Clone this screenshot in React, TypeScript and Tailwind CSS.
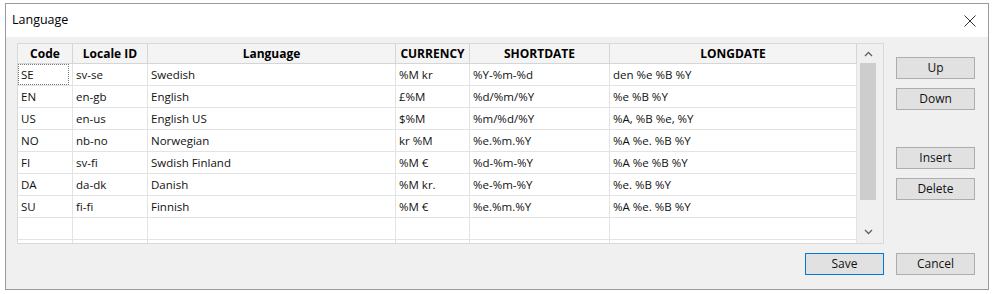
import React from "react";

const cols = [
  { w: 55, label: "Code" },
  { w: 75, label: "Locale ID" },
  { w: 248, label: "Language" },
  { w: 74, label: "CURRENCY" },
  { w: 140, label: "SHORTDATE" },
  { w: 247, label: "LONGDATE" },
];

const rows: string[][] = [
  ["SE", "sv-se", "Swedish", "%M kr", "%Y-%m-%d", "den %e %B %Y"],
  ["EN", "en-gb", "English", "£%M", "%d/%m/%Y", "%e %B %Y"],
  ["US", "en-us", "English US", "$%M", "%m/%d/%Y", "%A, %B %e, %Y"],
  ["NO", "nb-no", "Norwegian", "kr %M", "%e.%m.%Y", "%A %e. %B %Y"],
  ["FI", "sv-fi", "Swdish Finland", "%M €", "%d-%m-%Y", "%A %e %B %Y"],
  ["DA", "da-dk", "Danish", "%M kr.", "%e-%m-%Y", "%e. %B %Y"],
  ["SU", "fi-fi", "Finnish", "%M €", "%e.%m.%Y", "%A %e. %B %Y"],
  ["", "", "", "", "", ""],
  ["", "", "", "", "", ""],
];

function Btn({ label, primary }: { label: string; primary?: boolean }) {
  return (
    <div
      className={
        "w-[79px] h-[22px] flex items-center justify-center bg-[#e1e1e1] text-[12px] text-[#111] border " +
        (primary ? "border-[#0078d7]" : "border-[#adadad]")
      }
    >
      {label}
    </div>
  );
}

function Chevron({ up }: { up?: boolean }) {
  return (
    <svg width="9" height="6" viewBox="0 0 9 6">
      <path
        d={up ? "M1 5 L4.5 1.5 L8 5" : "M1 1 L4.5 4.5 L8 1"}
        fill="none"
        stroke="#606060"
        strokeWidth="1.3"
      />
    </svg>
  );
}

export default function App() {
  return (
    <div
      className="w-[994px] h-[294px] bg-white pt-[3px] pl-[5px]"
      style={{ fontFamily: '"Open Sans", "Noto Sans", sans-serif' }}
    >
      <div className="w-[984px] h-[287px] border border-[#9a9a9a] flex flex-col">
        <div className="h-[33px] bg-white flex items-center justify-between pl-[6px] pr-[12px]">
          <span className="text-[12.5px] text-black">Language</span>
          <svg width="12" height="12" viewBox="0 0 12 12">
            <path d="M0.5 0.5 L11.5 11.5 M11.5 0.5 L0.5 11.5" stroke="#333" strokeWidth="1" />
          </svg>
        </div>
        <div className="flex-1 bg-[#f0f0f0] pt-[6px] pl-[11px] pr-[12px] flex gap-[12px]">
          <div className="w-[867px] flex flex-col">
            <div className="h-[201px] border border-[#d9d9d9] bg-white flex overflow-hidden">
              <div className="w-[839px] flex flex-col overflow-hidden">
                <div className="h-[20px] flex border-b border-[#d5d5d5] bg-[#f4f4f4] shrink-0">
                  {cols.map((c, i) => (
                    <div
                      key={i}
                      style={{ width: c.w }}
                      className="shrink-0 h-full flex items-center justify-center font-bold text-[12px] text-black border-r border-[#d5d5d5]"
                    >
                      {c.label}
                    </div>
                  ))}
                </div>
                {rows.map((r, ri) => (
                  <div key={ri} className="h-[22px] flex border-b border-[#e3e3e3] shrink-0">
                    {r.map((v, ci) => (
                      <div
                        key={ci}
                        style={{ width: cols[ci].w }}
                        className="shrink-0 h-full flex items-center pl-[3px] text-[11.5px] text-[#111] border-r border-[#e3e3e3]"
                      >
                        {ri === 0 && ci === 0 ? (
                          <div className="w-full h-full border border-dotted border-[#777] flex items-center -ml-[3px] pl-[2px]">
                            {v}
                          </div>
                        ) : (
                          v
                        )}
                      </div>
                    ))}
                  </div>
                ))}
              </div>
              <div className="w-[26px] bg-[#f0f0f0] flex flex-col pl-[3px] pr-[7px]">
                <div className="h-[19px] flex items-center justify-center">
                  <Chevron up />
                </div>
                <div className="h-[137px] bg-[#cdcdcd]" />
                <div className="flex-1 flex items-end justify-center pb-[8px]">
                  <Chevron />
                </div>
              </div>
            </div>
            <div className="flex justify-end mt-[9px]">
              <Btn label="Save" primary />
            </div>
          </div>
          <div className="w-[79px] flex flex-col">
            <div className="mt-[14px]">
              <Btn label="Up" />
            </div>
            <div className="mt-[9px]">
              <Btn label="Down" />
            </div>
            <div className="mt-[37px]">
              <Btn label="Insert" />
            </div>
            <div className="mt-[9px]">
              <Btn label="Delete" />
            </div>
            <div className="mt-[53px]">
              <Btn label="Cancel" />
            </div>
          </div>
        </div>
      </div>
    </div>
  );
}
